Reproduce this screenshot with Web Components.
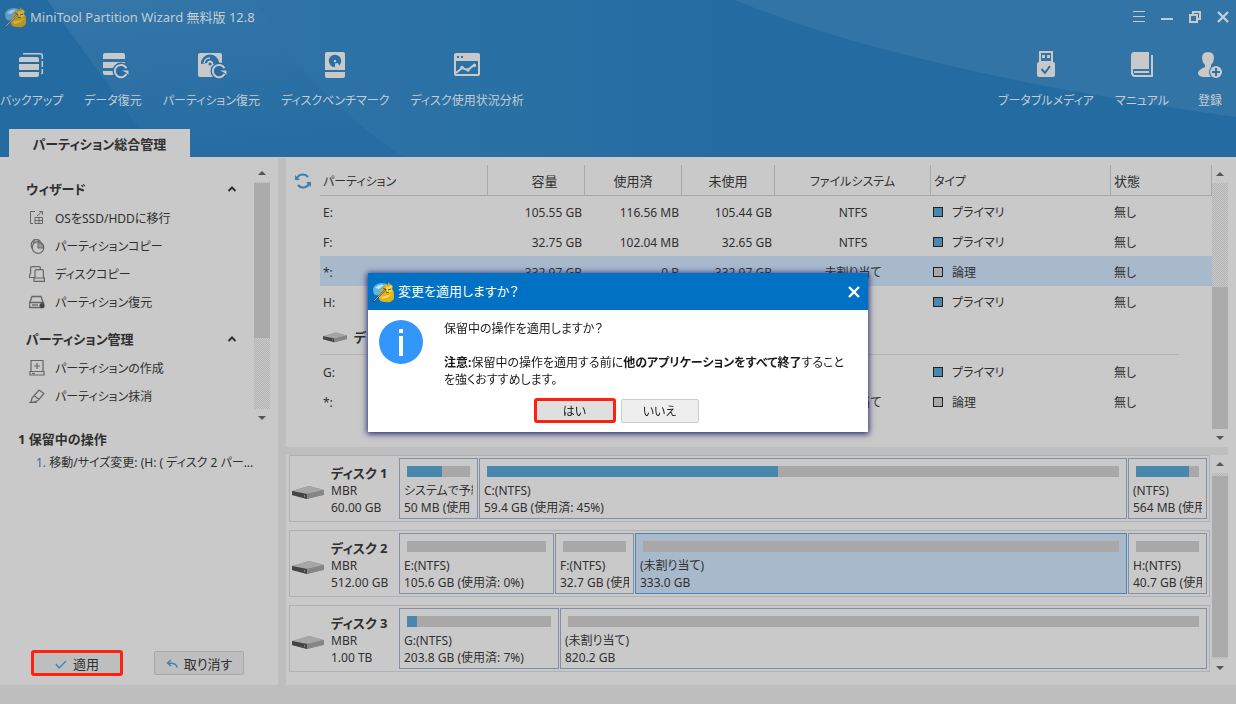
<!DOCTYPE html>
<html lang="ja">
<head>
<meta charset="utf-8">
<title>MiniTool Partition Wizard</title>
<style>
  html, body { height: 100%; margin: 0; }
  body {
    --jp: "Noto Sans", "Noto Sans CJK JP", sans-serif;
    --blue: #4a87ad;
    --gray: #a8a8a8;
    --panel: #c9c9c9;
    --edge: #bebebe;
    --select: #a7b9cb;
    font: 12px/17px var(--jp);
    font-feature-settings: "palt";
    color: #303030;
    background: var(--panel);
  }
</style>
</head>
<body>
<app-window></app-window>

<script>
const define = (name, html, setup) => {
  const template = document.createElement('template');
  template.innerHTML = html;
  customElements.define(name, class extends HTMLElement {
    constructor() {
      super();
      this.attachShadow({ mode: 'open' }).append(template.content.cloneNode(true));
    }
    connectedCallback() { if (setup) setup(this, this.shadowRoot); }
  });
};

const reload = '<circle cx="24" cy="22" r="8.500" fill="#276da3"/><path fill="none" stroke="#c9c9c9" stroke-width="2" d="M29.500 19.200A6.200 6.200 0 1 0 29.500 25"/><path d="M25 21.500h6.500v4.500L29 23.500z" fill="#c9c9c9"/>';

const ICONS = {
  backup: [32, `<path fill="#c9c9c9" d="M3 10q0-2 2-2h16q2 0 2 2v3H3zM3 15h20v6H3zM3 23h20v3q0 2-2 2H5q-2 0-2-2z"/><path fill="none" stroke="#c9c9c9" stroke-width="1.500" d="M7 4.700h17.300q2 0 2 2V10M26.300 12v6M26.300 20v4l-1 1"/>`],
  data: [32, `<path fill="#c9c9c9" d="M6 6q0-2 2-2h18q2 0 2 2v4H6zM6 13h22v6H6zM6 22h16v4H8q-2 0-2-2z"/>${reload}`],
  recover: [32, `<path fill="#c9c9c9" d="M3 6q0-2 2-2h20q2 0 2 2v22H5q-2 0-2-2z"/><path fill="#2b70a5" d="M6 15a9 9 0 0 1 18-1l-6 1a3 3 0 0 0-6-1z"/><path d="M9 14a6 6 0 0 1 6-5" stroke="#c9c9c9" stroke-width="1.500" fill="none"/><circle cx="15" cy="15" r="1.500" fill="#2b70a5"/>${reload}`],
  bench: [32, `<path fill="#c9c9c9" d="M6 5q0-2 2-2h16q2 0 2 2v16H6zM6 23h20v4q0 2-2 2H8q-2 0-2-2z"/><circle cx="16" cy="12" r="6.200" fill="#2b70a5"/><path d="M16 14.500l2.500-.500L22 18.500h-6z" fill="#c9c9c9"/><circle cx="16" cy="12" r="1.200" fill="#c9c9c9"/>`],
  usage: [32, `<path fill="#c9c9c9" fill-rule="evenodd" d="M3 6q0-2 2-2h22q2 0 2 2v19q0 2-2 2H5q-2 0-2-2zM5 12v13h22V12zM6 7h2v2H6zM10 7h2v2h-2z"/><path d="M5 24l6-5 6 2 7-6" fill="none" stroke="#c9c9c9" stroke-width="2"/><circle cx="11" cy="18.500" r="1.700" fill="#c9c9c9"/><circle cx="17" cy="21" r="1.700" fill="#c9c9c9"/><circle cx="23.500" cy="16.500" r="1.700" fill="#c9c9c9"/>`],
  usb: [32, `<path fill="#c9c9c9" fill-rule="evenodd" d="M9 2h14v11q2 0 2 2v11q0 2-2 2H9q-2 0-2-2V15q0-2 2-2V2zM11 4v8h10V4zM12 6h3v3h-3zM17 6h3v3h-3z"/><path d="M11.500 20l3.500 4 5-7" fill="none" stroke="#2b70a5" stroke-width="2"/>`],
  book: [32, `<path fill="#c9c9c9" d="M8 3h15v17H8q-3 0-3 3V7q0-4 3-4zM5 22h2q0 4 2 4h16V6h2v22H9q-4 0-4-5z"/><path fill="#c9c9c9" d="M8 22h15v2H8z"/><path d="M5 19h2v6H5z" fill="#c9c9c9"/>`],
  user: [32, `<path fill="#c9c9c9" d="M14 3q6 0 6 6 0 4-3 7v2l5 2v8H9q-5-1-5-4 0-3 7-6v-2q-3-3-3-7 0-6 6-6z"/><circle cx="22" cy="23" r="7" fill="#2f72a5"/><circle cx="22" cy="23" r="6" fill="#c9c9c9"/><path d="M18 23h8M22 19v8" stroke="#2f72a5" stroke-width="2"/>`],
  menu: [16, `<path d="M2 2.500h12M2 7.500h12M2 12.500h12" stroke="#c9c9c9"/>`],
  min: [16, `<path d="M2 10h12" stroke="#c9c9c9" stroke-width="2"/>`],
  restore: [16, `<path d="M3 6h7v7H3z M6 6V3h7v7h-3" fill="none" stroke="#c9c9c9" stroke-width="2"/>`],
  close: [16, `<path d="M3 3l10 10M13 3L3 13" stroke="currentColor" stroke-width="2.400"/>`],
  migrate: [16, `<path d="M6 1.500H1.500v12H4M6 7.500h7.500v6H6zM10 7.500v6M6 10.500h7.500M8 6l5-4.500M10 1.500h3.500V5" fill="none" stroke="#666"/>`],
  pcopy: [16, `<g fill="none" stroke="#666" stroke-width="1.200"><path d="M3.500 10.500A5.300 5.300 0 1 1 11.500 3.500M5 1v4"/><circle cx="9" cy="9.500" r="5.800"/></g><path d="M9 4.500V10h5.500A5.500 5.500 0 0 0 9 4.500" fill="#999" stroke="#666"/>`],
  dcopy: [16, `<path d="M5 11.500H.600V8.500l1-1V2q0-1.400 1.400-1.400h7Q11.400.600 11.400 2v1M6 11V5q0-1.400 1.400-1.400h5.600q1.400 0 1.400 1.400v6l1 1v3.400H5V12zM5.500 12h9.500" fill="none" stroke="#666" stroke-width="1.200"/>`],
  drive: [16, `<path d="M1 8l2-5.500h9L14 8M.500 8.500h14v5H.500z" fill="none" stroke="#666" stroke-width="1.300"/><circle cx="13" cy="11.500" r="2.500" fill="#444"/><path d="M3 10h6v2H3z" fill="#888"/>`],
  create: [16, `<path d="M2 .500h12v11H2zM1 11.500h14v3.500H1zM8 3v6M5 6h6M3 13.500h3" fill="none" stroke="#666" stroke-width="1.200"/>`],
  erase: [16, `<path d="M3 10l7-8 5 3.500-6 7-4.500 1.500H2zM5 7.500l5 4M0 14.500h8" fill="none" stroke="#666" stroke-width="1.200"/>`],
  chevron: [10, `<path d="M1.500 7L5 3.500 8.500 7" fill="none" stroke="#303030" stroke-width="2"/>`],
  check: [12, `<path d="M1 6l3 4 7-7" fill="none" stroke="#3f82b5" stroke-width="1.300"/>`],
  undo: [12, `<path d="M11 9.500q0-4.500-9-4.500M5 2L1.500 5 5 8" fill="none" stroke="#3f82b5" stroke-width="1.500"/>`],
  refresh: [16, `<path d="M1.500 7A6.500 6.500 0 0 1 13 4M14.500 9A6.500 6.500 0 0 1 3 12" fill="none" stroke="#3f7fae" stroke-width="2.200"/><path d="M0 2v5h5zM16 14V9h-5z" fill="#3f7fae"/>`],
  disk: [32, `<path d="M0 15l17-5 15 4v5l-17 4L0 19z" fill="#888"/><path d="M0 15l17-5 15 4-17 4z" fill="#a6a6a6"/><path d="M0 15l15 3v5L0 19z" fill="#444"/><path d="M15 18l17-4v4l-17 5z" fill="#858585"/><path d="M12 19h1v2h-1z" fill="#4caf50"/>`],
  info: [44, `<circle cx="22" cy="22" r="22" fill="#3296fa"/><path d="M20 9h4v4h-4zM20 16h4v20h-4z" fill="#fff"/>`],
};

const logo = dim => {
  const c = dim ? ['#5f9cc4', '#a9c6d6', '#b8951f', '#cdb24c', '#555'] : ['#64b4e0', '#bfe4f7', '#e3b21a', '#f7d650', '#444'];
  return `<path d="M1 8q1-5 8-6 5 0 7 2l-7 11-6-1q-2-2-2-6z" fill="${c[0]}"/><path d="M3 7q4-4 9-3l-5 4z" fill="${c[1]}"/>
  <path d="M7 13l5-8 2-2 1 2 2-4 1 3 3 1-1 3q2 2 2 4v5q-1 5-9 4-5 0-6-3z" fill="${c[2]}"/>
  <path d="M13 8l2-3 2 1 2-3 1 3-1 2 2 2-3 1-2 2-1-3zM9 15q6 1 11-3-2 5-10 6z" fill="${c[3]}"/>
  <path d="M11 7l2 1M16 9l3-1M14 11l3 1" stroke="#4d5a20"/>
  <path d="M1 21L14 8" stroke="${c[4]}" stroke-width="1.600"/><path d="M2 20L13 9" stroke="#bbb" stroke-width=".800"/>`;
};
ICONS.logo = [22, logo(false)];
ICONS.logodim = [22, logo(true)];

define('ui-icon', `<style>:host{display:block;flex:none;line-height:0}svg{display:block}</style><svg aria-hidden="true"></svg>`, (el, root) => {
  const [size, body] = ICONS[el.getAttribute('name')];
  const shown = el.getAttribute('size') || size;
  const svg = root.querySelector('svg');
  svg.setAttribute('viewBox', `0 0 ${size} ${size}`);
  svg.setAttribute('width', shown);
  svg.setAttribute('height', shown);
  svg.innerHTML = body;
});

define('tool-button', `
<style>
  :host { display: block; }
  button { all: unset; display: flex; flex-direction: column; align-items: center; gap: 11px; min-width: 40px;
    box-sizing: border-box; color: #c3ccd2; white-space: nowrap; line-height: 18px; cursor: pointer; }
</style>
<button type="button"><slot name="icon"></slot><span><slot></slot></span></button>`);

define('title-bar', `
<style>
  :host { display: flex; justify-content: space-between; align-items: center; height: 34px; padding: 0 5px 0 4px; color: #c3ccd2; }
  .name { display: flex; align-items: center; gap: 4px; font-size: 13px; white-space: nowrap; }
  .controls { display: flex; gap: 12px; }
  button { all: unset; cursor: pointer; }
</style>
<div class="name"><ui-icon name="logodim"></ui-icon><span>MiniTool Partition Wizard 無料版 12.8</span></div>
<div class="controls">
  <button aria-label="メニュー"><ui-icon name="menu"></ui-icon></button>
  <button aria-label="最小化"><ui-icon name="min"></ui-icon></button>
  <button aria-label="元に戻す"><ui-icon name="restore"></ui-icon></button>
  <button aria-label="閉じる"><ui-icon name="close"></ui-icon></button>
</div>`);

define('app-header', `
<style>
  :host { display: grid; height: 157px; flex: none; background: #236ba1; }
  .art, .content { grid-area: 1 / 1; min-width: 0; }
  .art { width: 100%; height: 157px; }
  .content { display: flex; flex-direction: column; }
  .tools { display: flex; justify-content: space-between; flex: 1; padding: 15px 6px 0 0; }
  .tools div { display: flex; align-items: flex-start; gap: 21px; }
  .tab { all: unset; align-self: flex-start; box-sizing: border-box; width: 181px; height: 28px; margin-left: 9px;
    text-align: center; font-weight: 700; font-size: 13px; line-height: 30px; background: var(--panel); }
</style>
<svg class="art" viewBox="0 0 1236 157" preserveAspectRatio="none" aria-hidden="true">
  <defs>
    <linearGradient id="a" x1="0" y1="0" x2=".3" y2="1"><stop offset="0" stop-color="#3476a8"/><stop offset="1" stop-color="#276da3"/></linearGradient>
    <linearGradient id="b" x1="0" y1="0" x2="1" y2="0"><stop offset="0" stop-color="#2f73a6"/><stop offset=".45" stop-color="#2a71a5"/><stop offset="1" stop-color="#236ba1"/></linearGradient>
  </defs>
  <path d="M47 0h208q40 70 148 157H160z" fill="url(#a)"/>
  <path d="M255 0h480v157H403Q310 95 255 0z" fill="url(#b)"/>
  <path d="M735 0h501v117Q900 70 735 0z" fill="#3274a6"/>
</svg>
<div class="content">
  <title-bar></title-bar>
  <div class="tools">
    <div>
      <tool-button><ui-icon slot="icon" name="backup"></ui-icon>バックアップ</tool-button>
      <tool-button><ui-icon slot="icon" name="data"></ui-icon>データ復元</tool-button>
      <tool-button><ui-icon slot="icon" name="recover"></ui-icon>パーティション復元</tool-button>
      <tool-button><ui-icon slot="icon" name="bench"></ui-icon>ディスクベンチマーク</tool-button>
      <tool-button><ui-icon slot="icon" name="usage"></ui-icon>ディスク使用状況分析</tool-button>
    </div>
    <div>
      <tool-button><ui-icon slot="icon" name="usb"></ui-icon>ブータブルメディア</tool-button>
      <tool-button><ui-icon slot="icon" name="book"></ui-icon>マニュアル</tool-button>
      <tool-button><ui-icon slot="icon" name="user"></ui-icon>登録</tool-button>
    </div>
  </div>
  <button class="tab" type="button">パーティション総合管理</button>
</div>`);

define('scroll-bar', `
<style>
  :host { display: flex; flex-direction: column; width: 16px; flex: none; background: var(--panel); }
  .end { height: 18px; display: grid; place-items: center; }
  .end::before { content: ""; border: 4px solid transparent; border-top-width: 0; border-bottom-color: #555; }
  .down::before { transform: rotate(180deg); }
  .track { flex: 1; display: flex; flex-direction: column; background: repeating-conic-gradient(#b3b3b3 0 25%, #cacaca 0 50%) 0 0 / 2px 2px; }
  .thumb { background: #ababab; }
</style>
<div class="end"></div>
<div class="track"><div class="before"></div><div class="thumb"></div><div class="after"></div></div>
<div class="end down"></div>`, (el, root) => {
  el.getAttribute('parts').split(' ').forEach((n, i) => { root.querySelector('.track').children[i].style.flex = n; });
});

define('side-group', `
<style>
  :host { display: block; margin-bottom: 8px; }
  button { all: unset; display: flex; width: 100%; height: 30px; align-items: center; justify-content: space-between;
    font-size: 13px; font-weight: 700; cursor: pointer; }
</style>
<button type="button" aria-expanded="true"><slot name="title"></slot><ui-icon name="chevron"></ui-icon></button>
<slot></slot>`);

define('side-link', `
<style>
  :host { display: block; }
  a { display: flex; align-items: center; gap: 10px; height: 28px; padding-left: 3px; color: inherit; text-decoration: none; white-space: nowrap; }
</style>
<a href="#"><slot name="icon"></slot><span><slot></slot></span></a>`);

define('side-panel', `
<style>
  :host { display: flex; flex-direction: column; width: 278px; flex: none; box-sizing: border-box; padding-top: 7px; }
  .wizard { display: flex; justify-content: space-between; height: 263px; padding-right: 8px; }
  nav { width: 211px; padding: 10px 0 0 26px; }
  h2 { margin: 3px 18px 6px; font-size: 13px; line-height: 18px; }
  ol { margin: 0 20px 0 36px; padding: 0; list-style: none; line-height: 18px; }
  li { white-space: nowrap; }
  .num { color: #45658a; }
  .actions { display: flex; align-items: center; gap: 31px; margin: auto 0 9px 31px; }
  button { box-sizing: border-box; display: flex; align-items: center; justify-content: center; gap: 6px; width: 90px; height: 24px;
    margin: 0; padding: 2px 0 0; font: inherit; font-feature-settings: inherit; font-size: 13px; color: inherit; background: #bebebe; border: 1px solid #a9a9a9; border-radius: 2px; }
  .apply { width: 92px; height: 26px; border: 3px solid #ff2010; border-radius: 3px; }
</style>
<div class="wizard">
  <nav>
    <side-group><span slot="title">ウィザード</span>
      <side-link><ui-icon slot="icon" name="migrate"></ui-icon>OSをSSD/HDDに移行</side-link>
      <side-link><ui-icon slot="icon" name="pcopy"></ui-icon>パーティションコピー</side-link>
      <side-link><ui-icon slot="icon" name="dcopy"></ui-icon>ディスクコピー</side-link>
      <side-link><ui-icon slot="icon" name="drive"></ui-icon>パーティション復元</side-link>
    </side-group>
    <side-group><span slot="title">パーティション管理</span>
      <side-link><ui-icon slot="icon" name="create"></ui-icon>パーティションの作成</side-link>
      <side-link><ui-icon slot="icon" name="erase"></ui-icon>パーティション抹消</side-link>
    </side-group>
  </nav>
  <scroll-bar parts="1 155 71"></scroll-bar>
</div>
<h2>1 保留中の操作</h2>
<ol><li><span class="num">1.</span> 移動/サイズ変更: (H: ( ディスク 2 パー...</li></ol>
<div class="actions">
  <button class="apply" type="button"><ui-icon name="check"></ui-icon>適用</button>
  <button type="button"><ui-icon name="undo"></ui-icon>取り消す</button>
</div>`);

const row = (name, size, used, free, fs, type, selected) => `
<tr${selected ? ' class="selected"' : ''}><td>${name}</td><td class="n">${size}</td><td class="n">${used}</td><td class="n">${free}</td>
<td class="c">${fs}</td><td class="t"><i class="${type === '論理' ? 'logical' : 'primary'}"></i>${type}</td><td>無し</td></tr>`;

define('partition-table', `
<style>
  :host { display: flex; height: 282px; padding-top: 8px; flex: none; }
  .refresh { all: unset; width: 34px; display: flex; justify-content: center; height: 31px; align-items: center; flex: none; cursor: pointer; }
  .area { flex: 1; min-width: 0; }
  table { width: 100%; table-layout: fixed; border-collapse: separate; border-spacing: 0; white-space: nowrap; }
  th, td { box-sizing: border-box; padding: 0 3px; text-align: left; font-weight: 400; overflow: hidden; }
  th { height: 31px; padding: 2px 3px 0; border-right: 1px solid #a9a9a9; border-bottom: 1px solid #a9a9a9; }
  th.k { font-size: 13px; }
  th.c, td.c { text-align: center; }
  th.r { padding-left: 20px; text-align: center; }
  td { height: 30px; padding-top: 2px; }
  td.n { text-align: right; }
  td.t { padding-left: 2px; }
  i { display: inline-block; box-sizing: border-box; width: 10px; height: 10px; margin-right: 9px; border: 1px solid #222; }
  .primary { background: var(--blue); }
  .logical { background: var(--gray); }
  .selected td { background: var(--select); }
  .disk td { height: 40px; font-size: 13px; font-weight: 700; border: 0; padding: 0 3px; }
  .disk div { display: flex; align-items: center; gap: 7px; height: 38px; box-sizing: border-box; border-bottom: 1px solid #b3b3b3; margin: 0 30px 1px -3px; padding: 4px 0 0 3px; }
</style>
<button class="refresh" type="button" aria-label="更新"><ui-icon name="refresh"></ui-icon></button>
<div class="area">
<table>
  <colgroup><col><col style="width:97px"><col style="width:97px"><col style="width:93px"><col style="width:156px"><col style="width:180px"><col style="width:101px"></colgroup>
  <thead><tr><th>パーティション</th><th class="r k">容量</th><th class="c k">使用済</th><th class="c k">未使用</th><th class="c">ファイルシステム</th><th>タイプ</th><th class="k">状態</th></tr></thead>
  <tbody>
  ${row('E:', '105.55 GB', '116.56 MB', '105.44 GB', 'NTFS', 'プライマリ')}
  ${row('F:', '32.75 GB', '102.04 MB', '32.65 GB', 'NTFS', 'プライマリ')}
  ${row('*:', '332.97 GB', '0 B', '332.97 GB', '未割り当て', '論理', true)}
  ${row('H:', '', '', '', '', 'プライマリ')}
  <tr class="disk"><td colspan="7"><div><ui-icon name="disk" size="24"></ui-icon>デ</div></td></tr>
  ${row('G:', '', '', '', '', 'プライマリ')}
  ${row('*:', '', '', '', '未割り当て', '論理')}
  </tbody>
</table>
</div>
<scroll-bar parts="104 142 0"></scroll-bar>`);

define('disk-part', `
<style>
  :host { display: block; box-sizing: border-box; min-width: 0; padding: 7px 4px 0; border: 1px solid #8490a2; overflow: hidden; white-space: nowrap; }
  :host([selected]) { background: var(--select); border-color: #4587bf; }
  .bar { height: 11px; margin: 0 3px 5px; background: var(--gray); }
  .fill { height: 100%; background: var(--blue); }
  p { margin: 0; overflow: hidden; }
</style>
<div class="bar"><div class="fill"></div></div>
<p><slot></slot></p><p><slot name="size"></slot></p>`, (el, root) => {
  root.querySelector('.fill').style.width = (el.getAttribute('used') || 0) + '%';
  const width = el.getAttribute('width');
  el.style.flex = width ? `0 0 ${width}px` : '1';
});

define('disk-row', `
<style>
  :host { display: flex; box-sizing: border-box; height: 67px; padding: 2px; border: 1px solid #aeb1b5; }
  .info { display: flex; align-items: center; gap: 7px; width: 107px; flex: none; white-space: nowrap; }
  ui-icon { padding-top: 6px; }
  .text { display: flex; flex-direction: column; padding-top: 2px; }
  strong { font-size: 13px; line-height: 18px; }
  .parts { display: flex; flex: 1; min-width: 0; gap: 1px; }
</style>
<div class="info"><ui-icon name="disk"></ui-icon><div class="text"><strong><slot name="name"></slot></strong><span><slot name="scheme"></slot></span><span><slot name="size"></slot></span></div></div>
<div class="parts"><slot></slot></div>`);

define('disk-map', `
<style>
  :host { display: flex; flex: 1; min-height: 0; }
  .rows { flex: 1; min-width: 0; display: flex; flex-direction: column; gap: 8px; margin: 0 2px 0 3px; }
  scroll-bar { height: 222px; }
</style>
<div class="rows">
  <disk-row><span slot="name">ディスク 1</span><span slot="scheme">MBR</span><span slot="size">60.00 GB</span>
    <disk-part width="79" used="56">システムで予約<span slot="size">50 MB (使用</span></disk-part>
    <disk-part used="46">C:(NTFS)<span slot="size">59.4 GB (使用済: 45%)</span></disk-part>
    <disk-part width="79" used="84">(NTFS)<span slot="size">564 MB (使用</span></disk-part>
  </disk-row>
  <disk-row><span slot="name">ディスク 2</span><span slot="scheme">MBR</span><span slot="size">512.00 GB</span>
    <disk-part width="155">E:(NTFS)<span slot="size">105.6 GB (使用済: 0%)</span></disk-part>
    <disk-part width="79">F:(NTFS)<span slot="size">32.7 GB (使用</span></disk-part>
    <disk-part selected>(未割り当て)<span slot="size">333.0 GB</span></disk-part>
    <disk-part width="79">H:(NTFS)<span slot="size">40.7 GB (使用</span></disk-part>
  </disk-row>
  <disk-row><span slot="name">ディスク 3</span><span slot="scheme">MBR</span><span slot="size">1.00 TB</span>
    <disk-part width="160" used="7">G:(NTFS)<span slot="size">203.8 GB (使用済: 7%)</span></disk-part>
    <disk-part>(未割り当て)<span slot="size">820.2 GB</span></disk-part>
  </disk-row>
</div>
<scroll-bar parts="3 181 2"></scroll-bar>`);

define('confirm-dialog', `
<style>
  :host { position: fixed; inset: 0; display: grid; place-items: center; }
  section { width: 500px; margin-top: 1px; background: #fff; color: #1a1a1a; box-shadow: 0 1px 6px 1px #2a2a70; }
  header { display: flex; align-items: center; gap: 4px; height: 37px; padding: 0 6px 0 4px; background: #0071c3; color: #fff; font-size: 13px; }
  h1 { margin: 0; flex: 1; font: inherit; }
  button { font: inherit; font-feature-settings: inherit; color: inherit; }
  header button { all: unset; cursor: pointer; }
  .body { display: flex; gap: 21px; padding: 10px 10px 0 11px; }
  p { margin: 0 0 17px; white-space: nowrap; }
  p:last-child { margin-bottom: 10px; }
  .buttons { display: flex; justify-content: center; align-items: center; gap: 5px; padding: 0 4px 9px 0; }
  .buttons button { box-sizing: border-box; width: 78px; height: 24px; margin: 0; padding: 2px 0 0; background: #eee; border: 1px solid #ccc; border-radius: 2px; }
  .buttons .yes { width: 82px; height: 25px; background: #dfdfdf; border: 3px solid #ff2010; border-radius: 3px; }
</style>
<section role="dialog" aria-label="変更を適用しますか？">
  <header><ui-icon name="logo"></ui-icon><h1>変更を適用しますか？</h1><button aria-label="閉じる"><ui-icon name="close"></ui-icon></button></header>
  <div class="body"><ui-icon name="info"></ui-icon>
    <div><p>保留中の操作を適用しますか？</p>
    <p><b>注意:</b>保留中の操作を適用する前に<b>他のアプリケーションをすべて終了</b>すること<br>を強くおすすめします。</p></div>
  </div>
  <div class="buttons"><button class="yes" type="button">はい</button><button type="button">いいえ</button></div>
</section>`);

define('app-window', `
<style>
  :host { display: flex; flex-direction: column; min-height: 100vh; }
  .main { display: flex; flex: 1; }
  .split { width: 8px; flex: none; margin-top: 1px; background: var(--edge); }
  .content { flex: 1; min-width: 0; display: flex; flex-direction: column; padding-right: 8px; }
  .bar { height: 8px; flex: none; background: var(--edge); }
  footer { height: 19px; flex: none; background: var(--edge); }
</style>
<app-header></app-header>
<div class="main">
  <side-panel></side-panel>
  <div class="split"></div>
  <div class="content">
    <partition-table></partition-table>
    <div class="bar"></div>
    <disk-map></disk-map>
  </div>
</div>
<footer></footer>
<confirm-dialog></confirm-dialog>`);
</script>
</body>
</html>
